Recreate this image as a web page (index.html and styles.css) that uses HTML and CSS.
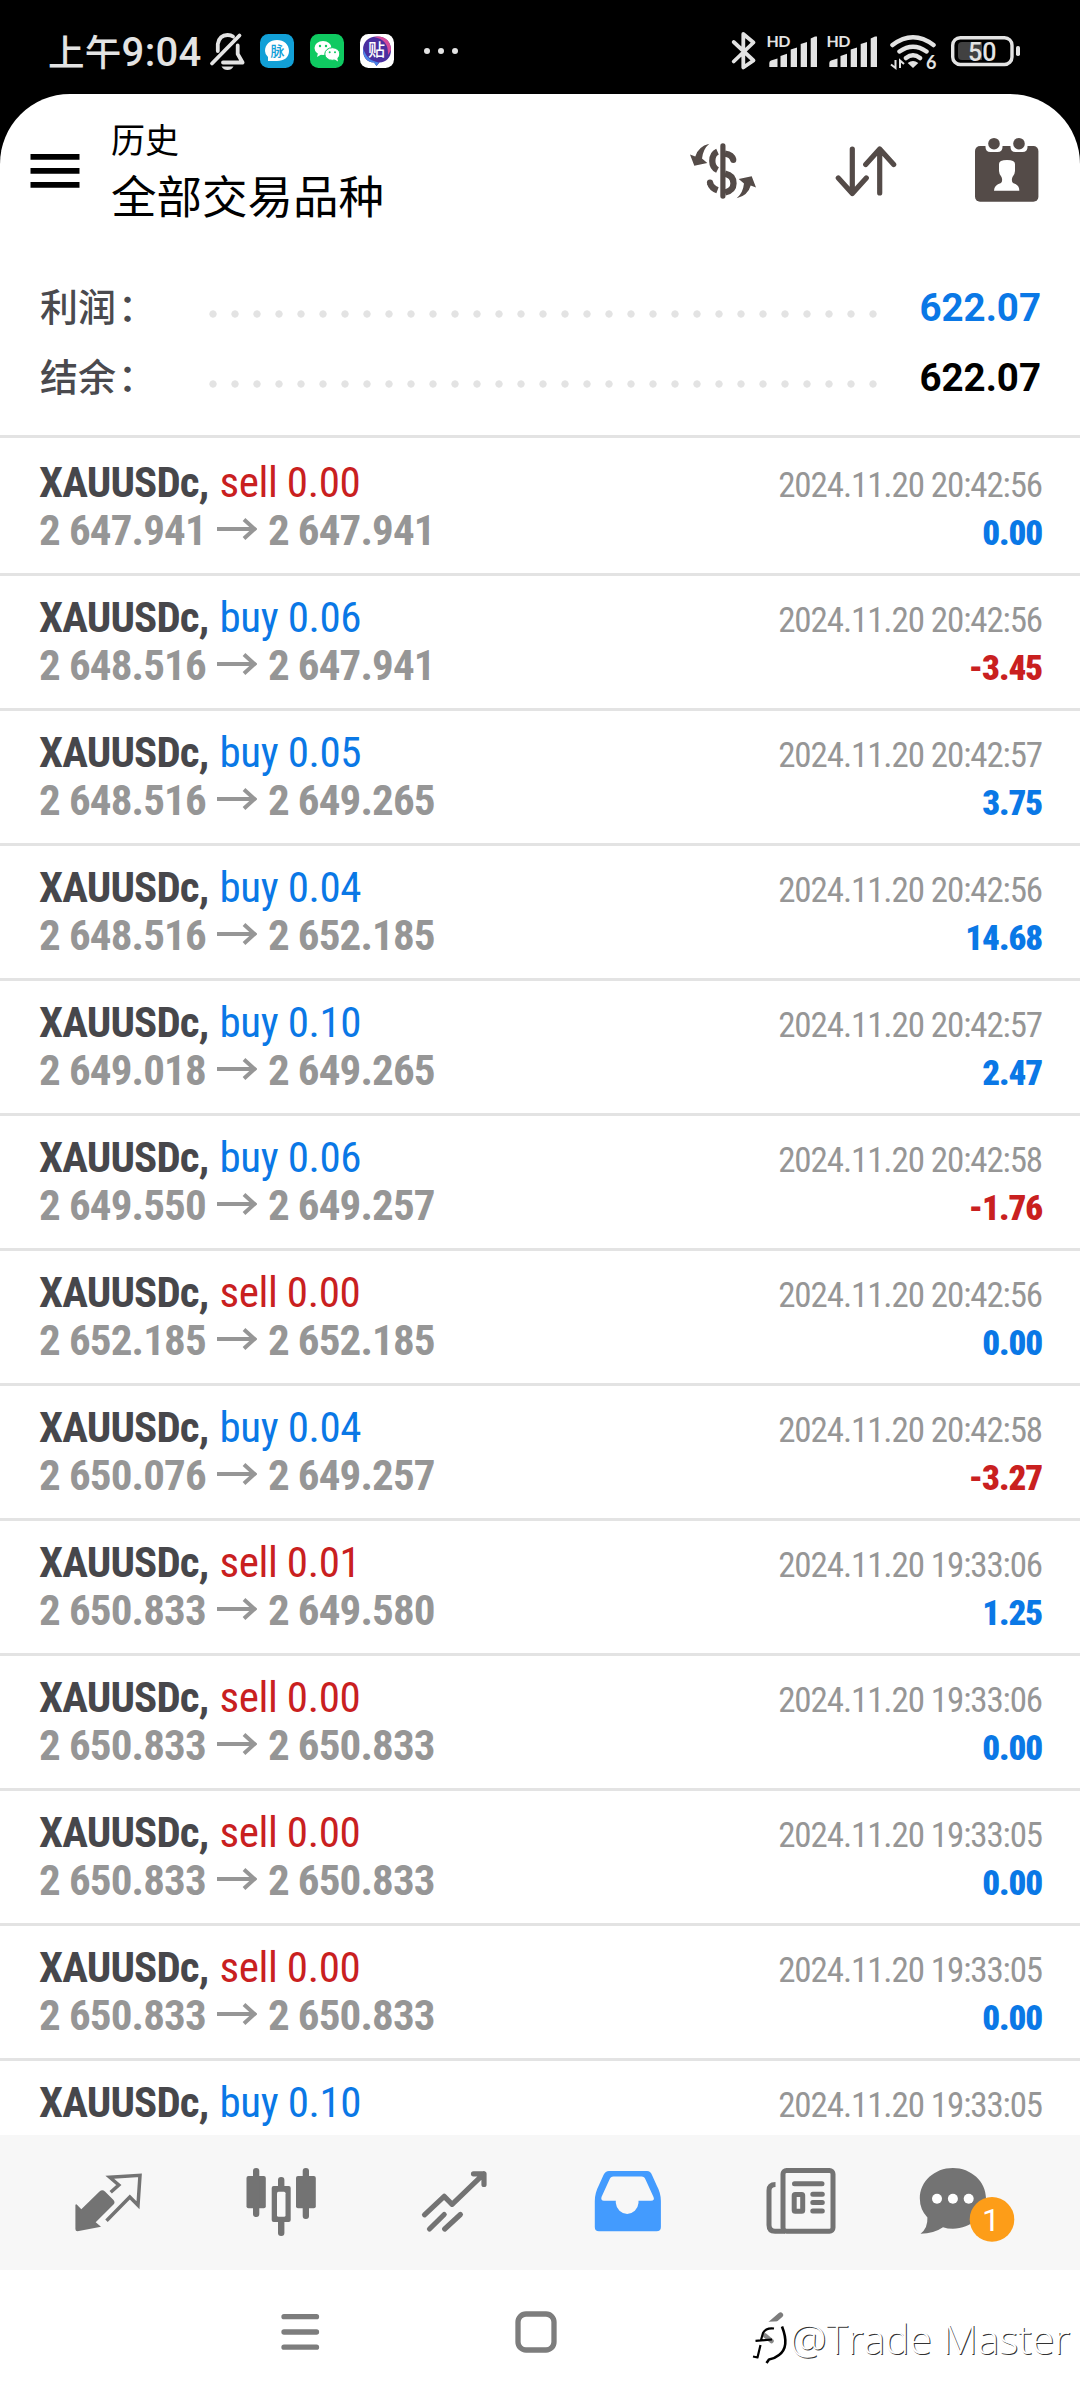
FILE: index.html
```html
<!DOCTYPE html>
<html lang="zh-CN">
<head>
<meta charset="utf-8">
<title>历史</title>
<link rel="stylesheet" href="styles.css">
</head>
<body>
<svg width="0" height="0" class="defs"><symbol id="arrow" viewBox="0 0 40 22"><path d="M0 11H36M27 1.5L37.5 11L27 20.5" fill="none" stroke="#969696" stroke-width="4"/></symbol></svg>
<div class="status">
  <div class="clock"><span class="ampm">上午</span>9:04</div>
  <svg class="status-left" viewBox="208 28 252 46" width="252" height="46">
    <g fill="none" stroke="#e3e3e3" stroke-width="3.8" stroke-linecap="round" stroke-linejoin="round">
      <path d="M212 63.500L239.500 35.500M217.800 51V44Q219.500 35 227.500 35Q231 35 233 36.500M237.700 45.500V54L242.600 62.500H223"/>
    </g>
    <path d="M221.500 66.500H233.500Q231.500 70 227.500 70T221.500 66.500" fill="#e3e3e3"/>
    <rect x="260" y="34" width="34" height="34" rx="8.500" fill="#12a0d7"/>
    <path d="M277 40C284 40 289 44.500 289 51S284 61 277 61H268V57Q265 54.500 265 51C265 44.500 270 40 277 40Z" fill="#fff"/>
    <text x="270.500" y="56" class="glyph-mai">脉</text>
    <rect x="310" y="34" width="34" height="34" rx="8.500" fill="#0fca61"/>
    <ellipse cx="323" cy="48" rx="8.500" ry="7" fill="#fff"/><path d="M318 53L317 57L322 54Z" fill="#fff"/>
    <ellipse cx="332.300" cy="54" rx="7.500" ry="6.300" fill="#fff" stroke="#0fca61" stroke-width="1"/><path d="M334 59L338 61.500L337 57Z" fill="#fff"/>
    <g fill="#0fca61"><circle cx="320" cy="46" r="1.200"/><circle cx="326" cy="46" r="1.200"/><circle cx="329.700" cy="52.300" r="1"/><circle cx="335" cy="52.300" r="1"/></g>
    <rect x="360" y="34" width="34" height="34" rx="8.500" fill="#fff"/>
    <path d="M377 36.500C386 36.500 391 42 391 50C391 58 386 62 379.500 62.500L376.500 66L374 62.500C367 62 363 58 363 50C363 42 368 36.500 377 36.500Z" fill="#4a2fa0"/>
    <path d="M378 36.500C386 36.500 391 42 391 50L388 55C388.500 44 384 39 374 37Z" fill="#d64a9a"/>
    <path d="M363 48C363 58 367 62 374 62.500L376.500 66L379 62.500C370 61 366 57 363 48Z" fill="#4a86e8"/>
    <text x="368" y="56" class="glyph-tie">贴</text>
    <g fill="#e3e3e3"><circle cx="427" cy="51" r="3"/><circle cx="441" cy="51" r="3"/><circle cx="455" cy="51" r="3"/></g>
  </svg>
  <svg class="status-right" viewBox="728 28 296 46" width="296" height="46">
    <path d="M733.700 42L753.500 60.500L743.300 67.500V34L753.500 42.500L733.700 61.500" fill="none" stroke="#e3e3e3" stroke-width="3.800" stroke-linecap="round" stroke-linejoin="round"/>
    <g id="sig" fill="#e3e3e3">
      <text x="766.500" y="47" class="hd" textLength="24">HD</text>
      <path d="M769.300 63Q769.300 61 771 60.500L777.500 58.500V67H769.300ZM780.500 56L787 53.700V67H780.500ZM790.700 49.500L797 47.500V67H790.700ZM800.700 44L807 42V67H800.700ZM810.700 38.500L815 36.500H817V67H810.700Z"/>
    </g>
    <use href="#sig" x="60"/>
    <g fill="none" stroke="#e3e3e3" stroke-width="4.500" stroke-linecap="round"><path d="M892.500 45Q913 29.500 933.500 45M899.500 51.500Q913 42 926.500 51.500M906 58Q913 52.500 920 58"/></g>
    <path d="M907.700 63Q913 59 918.300 63L913 68Z" fill="#e3e3e3"/>
    <path d="M895.500 60V68L891 64.500M900 68V60.500L904 64" fill="none" stroke="#e3e3e3" stroke-width="2"/>
    <text x="926" y="69" class="wifi6">6</text>
    <rect x="952.700" y="37.700" width="59.300" height="26.800" rx="7.500" fill="none" stroke="#e3e3e3" stroke-width="3.400"/>
    <path d="M962 42H982V60H962Q958 60 958 56V46Q958 42 962 42Z" fill="#414141"/>
    <rect x="1016" y="46" width="4" height="10" rx="1.800" fill="#e3e3e3"/>
    <text x="982.300" y="60.700" text-anchor="middle" class="batt">50</text>
  </svg>
</div>
<main class="app">
  <header class="header">
    <svg class="burger" viewBox="0 0 50 34" width="50" height="34"><path d="M.5 0h49v5.700h-49zM.5 14h49v5.700h-49zM.5 28h49v5.700h-49z"/></svg>
    <div class="titles"><div class="small">历史</div><div class="big">全部交易品种</div></div>
    <div class="tools">
      <svg viewBox="689 140 67 64" width="67" height="64" fill="#544b48">
        <rect x="719.300" y="143.300" width="5.200" height="55.400" rx="2.600"/>
        <g fill="none" stroke="#544b48" stroke-width="6.300"><path d="M716.500 151.700Q711.300 154 711.300 161Q711.300 167.500 716.500 170"/><path d="M724 153.700Q731 154.500 732.300 160" /><path d="M724 173.700Q732.500 175.500 732.500 183.500Q732.500 190.500 724 192.500M709 183Q710.500 188 716.500 190.300"/></g>
        <circle cx="732.300" cy="160" r="3"/><circle cx="709" cy="182.500" r="3.100"/>
        <g id="swoop"><path d="M693.300 165.700L689 154.500L694.300 156.500Q697 146.500 708.300 143.700Q702 149 701 158.500L706.300 163Z"/></g>
        <use href="#swoop" transform="rotate(180 722 171)"/>
      </svg>
      <svg viewBox="833 140 64 64" width="64" height="64" fill="none" stroke="#544b48" stroke-width="5.200" stroke-linecap="round" stroke-linejoin="round"><path d="M851.300 149V193M837.300 178L851.300 193.500L865.300 178M878.700 193V149M864.700 164.500L878.700 149L892.700 164.500"/></svg>
      <svg viewBox="975 134 64 76" width="64" height="76">
        <rect x="975" y="146" width="63.400" height="55.700" rx="5" fill="#544b48"/>
        <path d="M985.500 145H1002.500V147Q1002.500 152 997.500 152H990.500Q985.500 152 985.500 147ZM1010.500 145H1027.500V147Q1027.500 152 1022.500 152H1015.500Q1010.500 152 1010.500 147Z" fill="#fff"/>
        <circle cx="994" cy="143.700" r="5.800" fill="#544b48"/><circle cx="1019" cy="143.700" r="5.800" fill="#544b48"/>
        <path d="M999 164Q999 160 1007 160Q1015 160 1015 164V171Q1015 174 1012.500 177Q1011 181 1013 183Q1019.500 185 1019.300 190.700H994Q994 185 1001 183Q1003 181 1001.500 177Q999 174 999 171Z" fill="#fff"/>
      </svg>
    </div>
  </header>
  <section class="summary">
    <div class="sum"><span class="label">利润<span class="colon">：</span></span><span class="dots"></span><b class="pos">622.07</b></div>
    <div class="sum"><span class="label">结余<span class="colon">：</span></span><span class="dots"></span><b>622.07</b></div>
  </section>
  <section class="deals">
    <div class="deal"><div class="line"><span><b>XAUUSDc,</b> <i class="neg">sell 0.00</i></span><time>2024.11.20 20:42:56</time></div><div class="line px"><span>2 647.941<svg><use href="#arrow"/></svg>2 647.941</span><b class="pos">0.00</b></div></div>
    <div class="deal"><div class="line"><span><b>XAUUSDc,</b> <i class="pos">buy 0.06</i></span><time>2024.11.20 20:42:56</time></div><div class="line px"><span>2 648.516<svg><use href="#arrow"/></svg>2 647.941</span><b class="neg">-3.45</b></div></div>
    <div class="deal"><div class="line"><span><b>XAUUSDc,</b> <i class="pos">buy 0.05</i></span><time>2024.11.20 20:42:57</time></div><div class="line px"><span>2 648.516<svg><use href="#arrow"/></svg>2 649.265</span><b class="pos">3.75</b></div></div>
    <div class="deal"><div class="line"><span><b>XAUUSDc,</b> <i class="pos">buy 0.04</i></span><time>2024.11.20 20:42:56</time></div><div class="line px"><span>2 648.516<svg><use href="#arrow"/></svg>2 652.185</span><b class="pos">14.68</b></div></div>
    <div class="deal"><div class="line"><span><b>XAUUSDc,</b> <i class="pos">buy 0.10</i></span><time>2024.11.20 20:42:57</time></div><div class="line px"><span>2 649.018<svg><use href="#arrow"/></svg>2 649.265</span><b class="pos">2.47</b></div></div>
    <div class="deal"><div class="line"><span><b>XAUUSDc,</b> <i class="pos">buy 0.06</i></span><time>2024.11.20 20:42:58</time></div><div class="line px"><span>2 649.550<svg><use href="#arrow"/></svg>2 649.257</span><b class="neg">-1.76</b></div></div>
    <div class="deal"><div class="line"><span><b>XAUUSDc,</b> <i class="neg">sell 0.00</i></span><time>2024.11.20 20:42:56</time></div><div class="line px"><span>2 652.185<svg><use href="#arrow"/></svg>2 652.185</span><b class="pos">0.00</b></div></div>
    <div class="deal"><div class="line"><span><b>XAUUSDc,</b> <i class="pos">buy 0.04</i></span><time>2024.11.20 20:42:58</time></div><div class="line px"><span>2 650.076<svg><use href="#arrow"/></svg>2 649.257</span><b class="neg">-3.27</b></div></div>
    <div class="deal"><div class="line"><span><b>XAUUSDc,</b> <i class="neg">sell 0.01</i></span><time>2024.11.20 19:33:06</time></div><div class="line px"><span>2 650.833<svg><use href="#arrow"/></svg>2 649.580</span><b class="pos">1.25</b></div></div>
    <div class="deal"><div class="line"><span><b>XAUUSDc,</b> <i class="neg">sell 0.00</i></span><time>2024.11.20 19:33:06</time></div><div class="line px"><span>2 650.833<svg><use href="#arrow"/></svg>2 650.833</span><b class="pos">0.00</b></div></div>
    <div class="deal"><div class="line"><span><b>XAUUSDc,</b> <i class="neg">sell 0.00</i></span><time>2024.11.20 19:33:05</time></div><div class="line px"><span>2 650.833<svg><use href="#arrow"/></svg>2 650.833</span><b class="pos">0.00</b></div></div>
    <div class="deal"><div class="line"><span><b>XAUUSDc,</b> <i class="neg">sell 0.00</i></span><time>2024.11.20 19:33:05</time></div><div class="line px"><span>2 650.833<svg><use href="#arrow"/></svg>2 650.833</span><b class="pos">0.00</b></div></div>
    <div class="deal"><div class="line"><span><b>XAUUSDc,</b> <i class="pos">buy 0.10</i></span><time>2024.11.20 19:33:05</time></div><div class="line px"><span>2 650.833<svg><use href="#arrow"/></svg>2 650.833</span></div></div>
  </section>
</main>
<nav class="tabs">
  <svg viewBox="21 0 173 135"><path d="M76.500 69.300L81.300 74.300L99.500 56.500Q102.300 54 105 56.500L113.500 65Q115.500 67.300 113.500 69.500L95.700 87.300L101 91.700L77.500 96.300Q75.400 96.300 75.400 94V69.800Z" fill="#737373"/><path d="M110.700 57.300L118.800 50L109.800 42.300L140 40.300L138 70.300L129.800 62L106.500 85.700" fill="none" stroke="#737373" stroke-width="3.500"/></svg>
  <svg viewBox="194 0 173 135" fill="#737373"><rect x="246.500" y="41" width="19.300" height="32.300" rx="2"/><rect x="253" y="33" width="6.300" height="49" rx="3"/><rect x="296" y="41" width="19.800" height="32.300" rx="2"/><rect x="302.700" y="33" width="6.300" height="51" rx="3"/><rect x="278" y="42" width="6.400" height="59" rx="3"/><rect x="271.700" y="51" width="19" height="36" rx="2"/><rect x="277" y="56.700" width="8.500" height="25" rx="1.500" fill="#f7f7f7"/></svg>
  <svg viewBox="367 0 173 135" fill="none" stroke="#737373" stroke-width="5.200" stroke-linecap="round" stroke-linejoin="round"><path d="M424.500 79.800L444.200 61.300L452.100 69.300L483.800 38.800M473.500 38.800H484V49.500M429.500 94L444.200 79.500M444.700 94L460.400 79.500"/></svg>
  <svg viewBox="540 0 173 135"><path fill-rule="evenodd" fill="#439bfe" d="M609 36H647Q650.500 36 652 40L656.500 50Q660.900 58 660.900 66V92Q660.900 96.300 656.500 96.300H599Q594.800 96.300 594.800 92V66Q594.800 58 599 50L603.500 40Q605.500 36 609 36ZM613.500 41.500Q610.500 41.500 609.500 44.500L601.500 62Q600.500 65.700 604 65.700H615.800V68A11.400 12 0 0 0 638.500 68V65.700H651Q655 65.700 653.500 62L645.500 44.500Q644.500 41.500 641.500 41.500Z"/></svg>
  <svg viewBox="713 0 173 135" fill="none" stroke="#737373" stroke-width="5" stroke-linecap="round"><rect x="783" y="35.500" width="50" height="60.800" rx="3.500"/><path d="M775.500 49.500Q769 49.500 769 55.500V90Q769 96.200 775 96.200H785" stroke-linecap="butt"/><path d="M794.500 48.700H822M812.800 59.300H822.300M812.800 67.500H822.300M812.800 75.900H822.300"/><rect x="794.200" y="59.500" width="8.500" height="16.700" rx="1"/></svg>
  <svg viewBox="886 0 173 135"><path d="M952.900 33C971 33 986 46.500 986 63.300S971 93.700 952.900 93.700Q947.500 93.700 943 92.200Q934 98.500 920.500 98.700Q928 93 927.400 82.500Q919.800 74.500 919.800 63.300C919.800 46.500 934.500 33 952.900 33Z" fill="#737373"/><g fill="#fff"><circle cx="937" cy="63.700" r="5"/><circle cx="952.900" cy="63.700" r="5"/><circle cx="968.700" cy="63.700" r="5"/></g><circle cx="992" cy="84.400" r="22.300" fill="#fd9d18"/><text x="991" y="96" text-anchor="middle" class="badge">1</text></svg>
</nav>
<footer class="system">
  <svg viewBox="0 2270 1080 130" width="1080" height="130">
    <g fill="none" stroke="#7d7d7d" stroke-width="5.300" stroke-linecap="round">
      <path d="M284 2316.700H316.500M284 2332H316.500M284 2347.200H316.500M780.500 2315L762 2331L771 2341"/>
      <rect x="518" y="2314" width="36" height="36" rx="8"/>
    </g>
    <path d="M762 2322L786 2321L787 2350L768 2364L752 2360L755 2336Z" fill="#fff"/>
    <path d="M765 2335.500L771.500 2341" stroke="#888" stroke-width="4.500" stroke-linecap="round"/>
    <g fill="none" stroke="#000" stroke-linejoin="round"><path d="M774 2328.500Q766 2327.500 763 2333L761 2340M755.500 2340.800L772 2339.500M760.500 2345L757.500 2357.500L753 2356.500" stroke-width="2.200"/><path d="M782 2326.500Q790 2347 779 2355Q774 2359 769 2359.500L766.500 2363" stroke-width="2.600"/></g>
    <text x="790" y="2354" class="mark" textLength="280">@Trade Master</text>
  </svg>
</footer>
</body>
</html>
```
FILE: styles.css
```css
* { box-sizing: border-box; }
body {
  margin: 0;
  width: 1080px;
  height: 2400px;
  overflow: hidden;
  background: #000;
  display: flex;
  flex-direction: column;
  font-family: Roboto, "Noto Sans CJK SC", sans-serif;
}
.defs { position: absolute; }
.status {
  height: 94px;
  flex: none;
  display: flex;
  align-items: flex-start;
  padding: 28px 56px 0 48px;
}
.clock {
  width: 160px;
  color: #e3e3e3;
  font-size: 40px;
  font-weight: 500;
  line-height: 46px;
  letter-spacing: .3px;
  white-space: nowrap;
}
.ampm { font: 500 36.5px/46px "Noto Sans CJK SC", sans-serif; }
.status-right { margin-left: auto; }
.glyph-mai { font: 500 14px "Noto Sans CJK SC", sans-serif; fill: #12a0d7; }
.glyph-tie { font: 500 17px "Noto Sans CJK SC", sans-serif; fill: #fff; }
.hd { font: 700 16px Lato, sans-serif; }
.wifi6 { font: 700 18px Lato, sans-serif; fill: #e3e3e3; }
.batt { font: 500 25px Roboto, sans-serif; fill: #e3e3e3; }

.app {
  height: 2041px;
  flex: none;
  overflow: hidden;
  background: #fff;
  border-radius: 70px 70px 0 0;
}
.header {
  height: 156px;
  display: flex;
  align-items: center;
  padding: 0 41px 0 30px;
}
.burger { margin-top: -2px; }
.titles {
  margin: -2px 0 0 31px;
  color: #000;
  font-family: "Noto Sans CJK SC", sans-serif;
}
.small { font-size: 34px; line-height: 46px; }
.big { font-size: 45.5px; line-height: 64px; }
.tools {
  margin-left: auto;
  display: flex;
  align-items: center;
  gap: 77px;
}
.summary { padding: 21px 39px 24px 40px; }
.sum {
  height: 70px;
  display: flex;
  align-items: center;
  font-size: 39px;
}
.sum b { margin: 2px 0 0 auto; color: #000; font-size: 38.5px; }
.label {
  width: 161.5px;
  margin-top: -3px;
  color: #4a4a4e;
  font: 500 38px/70px "Noto Sans CJK SC", sans-serif;
}
.colon { margin-left: 2px; }
.dots {
  width: 682px;
  height: 22px;
  margin-top: 16px;
  background: radial-gradient(circle, #e3e3e3 3.3px, transparent 4px) 0 0 / 22px 22px;
}
.deal {
  height: 135px;
  border-top: 3px solid #e3e3e3;
  padding: 17px 38px 0 39px;
  font-family: "Roboto Condensed", Roboto, sans-serif;
  font-size: 43px;
  letter-spacing: -.85px;
}
.deal:first-child { height: 138px; padding-top: 20px; }
.line {
  height: 48px;
  display: flex;
  justify-content: space-between;
  align-items: baseline;
  line-height: 48px;
  color: #47474b;
}
.line i { margin-left: 2px; font-style: normal; letter-spacing: -.4px; }
.px { color: #969696; font-weight: 700; }
.px svg { width: 40px; height: 22px; margin: 0 11px 5px 11px; vertical-align: baseline; }
.line time { color: #969696; font-size: 35px; letter-spacing: -1.1px; }
.px b { font-size: 35px; letter-spacing: -1.1px; }
.sum .pos, .line .pos { color: #0a78e6; }
.line .neg { color: #c9201f; }

.tabs {
  height: 135px;
  flex: none;
  display: flex;
  padding: 0 21px;
  background: #f7f7f7;
}
.tabs svg { width: 173px; height: 135px; }
.badge { font: 400 32px Roboto, sans-serif; fill: #fff; }
.system { height: 130px; background: #fff; }
.system svg { display: block; }
.mark {
  font: 300 41px "Open Sans", "Noto Sans", sans-serif;
  fill: #fff;
  text-shadow: 1px 1px 0 #333;
}
```
